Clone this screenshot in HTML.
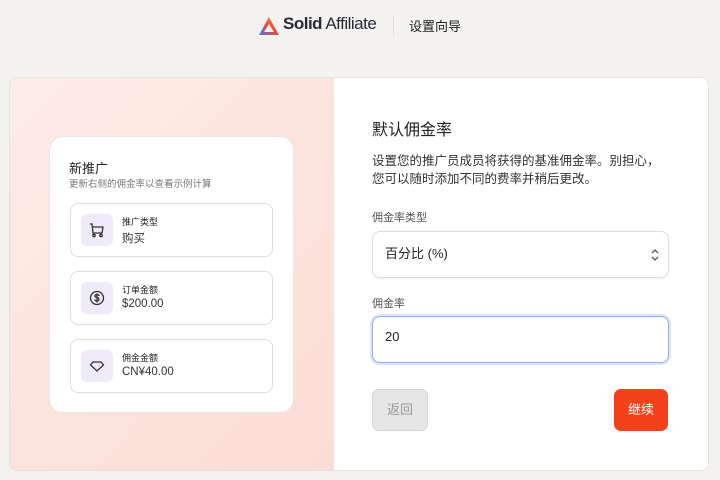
<!DOCTYPE html>
<html><head><meta charset="utf-8"><style>
*{box-sizing:border-box;margin:0;padding:0}
body{width:720px;height:480px;background:#f3f2ef;font-family:"Liberation Sans","Noto Sans CJK SC",sans-serif;color:#222;position:relative;overflow:hidden}
.hdr{position:absolute;top:14px;left:0;width:720px;height:24px}
.logo{position:absolute;left:258px;top:2px}
.brand{position:absolute;left:283px;top:0px;font-size:17px;letter-spacing:-0.5px;color:#2a2a3a}
.sep{position:absolute;left:393px;top:2px;width:1px;height:20px;background:#ddd}
.setup{position:absolute;left:409px;top:2px;font-size:13px;color:#222}
.card{position:absolute;left:9px;top:77px;width:700px;height:394px;border-radius:8px;overflow:hidden;border:1px solid #e6e2de;background:#fff}
.left{position:absolute;left:0;top:0;width:324px;height:100%;background:linear-gradient(135deg,#fdece6,#fcdcd6)}
.inner{position:absolute;left:39px;top:58px;width:245px;height:277px;background:#fff;border-radius:14px;border:1px solid #ece6e4}
.t1{position:absolute;left:19px;top:21px;font-size:13px}
.t2{position:absolute;left:19px;top:39px;font-size:9.5px;color:#777}
.it{position:absolute;left:20px;width:203px;height:54px;border:1px solid #ddd;border-radius:8px}
.ic{position:absolute;left:10px;top:10px;width:32px;height:32px;border-radius:6px;background:#efeaf9;display:flex;align-items:center;justify-content:center}
.l1{position:absolute;left:51px;top:11px;font-size:9px}
.l2{position:absolute;left:51px;top:26px;font-size:11.5px;color:#333}
.right{position:absolute;left:324px;top:0}
h2{position:absolute;left:38px;top:38px;font-size:16px;font-weight:normal;white-space:nowrap}
.desc{position:absolute;left:38px;top:74px;width:300px;font-size:12.5px;line-height:18px;color:#333;white-space:nowrap}
.lab{position:absolute;left:38px;font-size:11px;color:#555;white-space:nowrap}
.box{position:absolute;left:38px;width:297px;height:47px;border:1px solid #ddd;border-radius:8px;background:#fff;font-size:13px;padding:11px 12px;box-shadow:0 1px 2px rgba(0,0,0,.06)}
.btn{position:absolute;top:311px;height:42px;border-radius:7px;font-size:13px;display:flex;align-items:center;justify-content:center;padding-bottom:4px}
</style></head><body>
<div class="hdr">
<svg class="logo" width="22" height="20" viewBox="0 0 22 20"><defs><linearGradient id="g" x1="0" y1="1" x2="1" y2="0"><stop offset="0" stop-color="#3a7bf0"/><stop offset=".5" stop-color="#f0483a"/><stop offset="1" stop-color="#f5b030"/></linearGradient></defs><path d="M11 1 L21 19 L1 19 Z M11 8 L6 16 L16 16 Z" fill="url(#g)" fill-rule="evenodd"/></svg>
<div class="brand"><b>Solid</b> Affiliate</div>
<div class="sep"></div>
<div class="setup">设置向导</div>
</div>
<div class="card">
<div class="left">
<div class="inner">
<div class="t1">新推广</div>
<div class="t2">更新右侧的佣金率以查看示例计算</div>
<div class="it" style="top:66px"><div class="ic"><svg width="16" height="16" viewBox="0 0 16 16" fill="none" stroke="#333" stroke-width="1.3"><path d="M1 2h2l1 9h9l1-6H4"/><circle cx="5" cy="13.5" r="1.2"/><circle cx="12" cy="13.5" r="1.2"/></svg></div><div class="l1">推广类型</div><div class="l2">购买</div></div>
<div class="it" style="top:134px"><div class="ic"><svg width="16" height="16" viewBox="0 0 16 16" fill="none" stroke="#333" stroke-width="1.3"><circle cx="8" cy="8" r="6.5"/><path d="M10 6c0-1-1-1.5-2-1.5S6 5 6 6s1 1.3 2 1.5 2 .7 2 1.7S9 11 8 11s-2-.5-2-1.5M8 3.5v9"/></svg></div><div class="l1">订单金额</div><div class="l2">$200.00</div></div>
<div class="it" style="top:202px"><div class="ic"><svg width="16" height="16" viewBox="0 0 16 16" fill="none" stroke="#333" stroke-width="1.3"><path d="M4 4h8l2.5 3L8 13 1.5 7z"/></svg></div><div class="l1">佣金金额</div><div class="l2">CN¥40.00</div></div>
</div>
</div>
<div class="right">
<h2>默认佣金率</h2>
<div class="desc">设置您的推广员成员将获得的基准佣金率。别担心，<br>您可以随时添加不同的费率并稍后更改。</div>
<div class="lab" style="top:131px">佣金率类型</div>
<div class="box" style="top:153px">百分比 (%)<svg style="position:absolute;right:8px;top:16px" width="10" height="14" viewBox="0 0 10 14" fill="none" stroke="#555" stroke-width="1.3"><path d="M2 5l3-3 3 3M2 9l3 3 3-3"/></svg></div>
<div class="lab" style="top:217px">佣金率</div>
<div class="box" style="top:238px;border:1.5px solid #8fb0ea;box-shadow:0 0 0 2px #dbe6fa;padding-top:12px">20</div>
<div class="btn" style="left:38px;width:56px;background:#e6e6e6;border:1px solid #d5d5d5;color:#999">返回</div>
<div class="btn" style="left:280px;width:54px;background:#f5401c;color:#fff">继续</div>
</div>
</div>
</body></html>
